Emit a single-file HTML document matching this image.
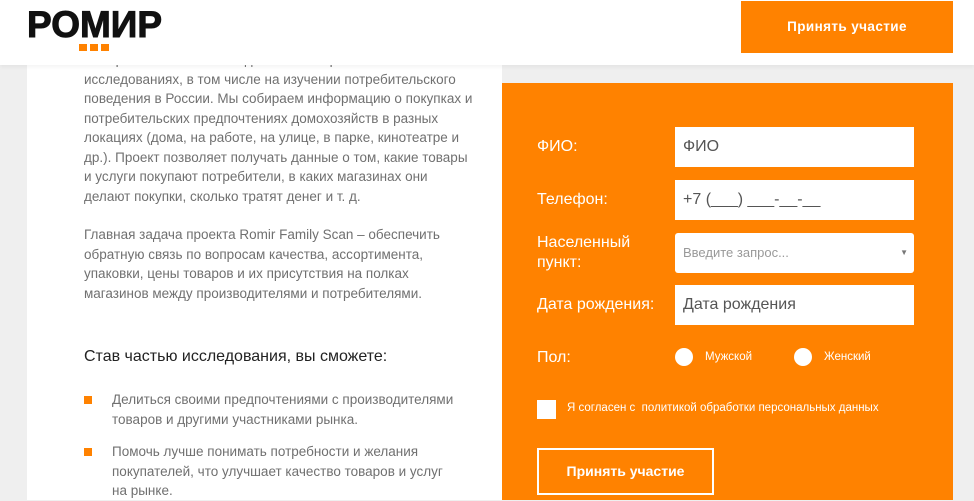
<!DOCTYPE html>
<html><head><meta charset="utf-8"><style>
body{margin:0;width:974px;height:500px;overflow:hidden;background:#efefef;font-family:"Liberation Sans",Arial,sans-serif;position:relative}
.hdr{position:absolute;left:0;top:0;width:974px;height:65px;background:#fff;z-index:2;box-shadow:0 2px 4px rgba(0,0,0,.05)}
.logo{position:absolute;left:27px;top:4px;font-weight:900;font-size:37px;letter-spacing:0;color:#111;font-family:"Liberation Sans",Arial,sans-serif;-webkit-text-stroke:1px #111}
.dots{position:absolute;left:79px;top:38px}
.dots i{display:inline-block;width:8px;height:7px;background:#ff8200;margin-right:3px}
.hbtn{position:absolute;left:741px;top:1px;width:212px;height:52px;background:#ff8200;color:#fff;font-weight:bold;font-size:13.5px;text-align:center;line-height:52px;letter-spacing:.4px}
.left{position:absolute;left:27px;top:0;width:475px;height:500px;background:#fff}
.txt{position:absolute;left:84px;width:400px;font-size:13.5px;line-height:19.5px;color:#707070}
.h{position:absolute;left:84px;top:348px;font-size:16px;color:#222}
.b{position:absolute;left:84px;width:8px;height:8px;background:#ff8200}
.or{position:absolute;left:502px;top:83px;width:451px;height:417px;background:#ff8200}
.lab{position:absolute;left:537px;color:#fff;font-size:16px;line-height:20px}
.in{position:absolute;left:675px;width:239px;height:40px;background:#fff;box-sizing:border-box;padding-left:8px;line-height:40px;font-size:16px;color:#555}
.rad{position:absolute;width:18px;height:18px;border-radius:50%;background:#fff;top:348px}
.sm{position:absolute;color:#fff;font-size:11.5px}
</style></head><body>
<div class="left"></div>
<div class="txt" style="top:50px">в потребительских и поведенческих маркетинговых<br>исследованиях, в том числе на изучении потребительского<br>поведения в России. Мы собираем информацию о покупках и<br>потребительских предпочтениях домохозяйств в разных<br>локациях (дома, на работе, на улице, в парке, кинотеатре и<br>др.). Проект позволяет получать данные о том, какие товары<br>и услуги покупают потребители, в каких магазинах они<br>делают покупки, сколько тратят денег и т. д.</div>
<div class="txt" style="top:225px">Главная задача проекта Romir Family Scan – обеспечить<br>обратную связь по вопросам качества, ассортимента,<br>упаковки, цены товаров и их присутствия на полках<br>магазинов между производителями и потребителями.</div>
<div class="h">Став частью исследования, вы сможете:</div>
<div class="b" style="top:396px"></div>
<div class="txt" style="left:112px;top:390px">Делиться своими предпочтениями с производителями<br>товаров и другими участниками рынка.</div>
<div class="b" style="top:448px"></div>
<div class="txt" style="left:112px;top:442px">Помочь лучше понимать потребности и желания<br>покупателей, что улучшает качество товаров и услуг<br>на рынке.</div>
<div class="or"></div>
<div class="lab" style="top:137px">ФИО:</div><div class="in" style="top:127px">ФИО</div>
<div class="lab" style="top:190px">Телефон:</div><div class="in" style="top:180px">+7 (___) ___-__-__</div>
<div class="lab" style="top:233px">Населенный<br>пункт:</div><div class="in" style="top:233px;font-size:13px;color:#999;border-radius:3px">Введите запрос...<span style="position:absolute;right:6px;top:0;font-size:8px;color:#777">▼</span></div>
<div class="lab" style="top:295px">Дата рождения:</div><div class="in" style="top:285px">Дата рождения</div>
<div class="lab" style="top:348px">Пол:</div>
<div class="rad" style="left:675px"></div><div class="sm" style="left:705px;top:351px">Мужской</div>
<div class="rad" style="left:794px"></div><div class="sm" style="left:824px;top:351px">Женский</div>
<div style="position:absolute;left:537px;top:400px;width:19px;height:19px;background:#fff"></div>
<div class="sm" style="left:567px;top:402px">Я согласен с &nbsp;политикой обработки персональных данных</div>
<div style="position:absolute;left:537px;top:448px;width:177px;height:47px;border:2px solid #fff;box-sizing:border-box;color:#fff;font-weight:bold;font-size:14px;text-align:center;line-height:43px">Принять участие</div>
<div class="hdr"><div class="logo">РОМИР</div><div class="dots"><i></i><i></i><i></i></div><div class="hbtn">Принять участие</div></div>
</body></html>
